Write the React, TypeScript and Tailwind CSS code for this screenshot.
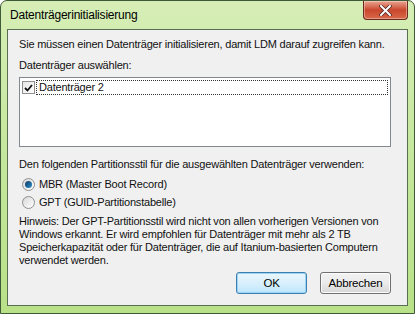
const font = { fontFamily: '"Liberation Sans", Arial, sans-serif' };

function CloseButton() {
  return (
    <div className="flex h-[19px] w-[45px] items-center justify-center rounded-b-[4px] border border-t-0 border-[#6b2a1c] bg-gradient-to-b from-[#e9a493] via-[#c9462c] to-[#d9694a] shadow-[inset_0_0_0_1px_rgba(255,255,255,0.35)]">
      <svg width="13" height="11" viewBox="0 0 13 11">
        <path d="M2 1 L11 10 M11 1 L2 10" stroke="#4a2018" strokeWidth="3.4" strokeLinecap="square" />
        <path d="M2 1 L11 10 M11 1 L2 10" stroke="#ffffff" strokeWidth="2" strokeLinecap="square" />
      </svg>
    </div>
  );
}

function Radio({ checked }: { checked?: boolean }) {
  return (
    <span className="flex h-[13px] w-[13px] items-center justify-center rounded-full border border-[#8f8f8f] bg-gradient-to-br from-[#d8d8d8] to-[#ffffff]">
      {checked && <span className="h-[7px] w-[7px] rounded-full bg-gradient-to-br from-[#0f3d66] to-[#2f8fcc]" />}
    </span>
  );
}

function Button({ label, primary }: { label: string; primary?: boolean }) {
  return (
    <div
      className={
        "flex h-[22px] w-[71px] items-center justify-center rounded-[3px] border bg-gradient-to-b text-[11.5px] tracking-[-0.2px] text-black " +
        (primary
          ? "border-[#3c7fb1] from-[#eaf6fd] via-[#d9f0fc] to-[#bee6fd] shadow-[inset_0_0_0_1px_#9ed4f3]"
          : "border-[#707070] from-[#f2f2f2] via-[#ebebeb] to-[#d6d6d6] shadow-[inset_0_0_0_1px_#fcfcfc]")
      }
    >
      {label}
    </div>
  );
}

export default function App() {
  return (
    <div className="h-[314px] w-[415px] bg-white" style={font}>
      <div className="flex h-full w-full flex-col rounded-t-[7px] border border-[#3f5a36] bg-gradient-to-b from-[#d6eeb6] via-[#c5e79d] to-[#b8e188] px-[6px] pb-[7px]">
        <div className="flex h-[28px] items-start justify-between">
          <span className="mt-[7px] pl-[3px] text-[12px] leading-[15px] tracking-[-0.2px] text-black">Datenträgerinitialisierung</span>
          <CloseButton />
        </div>
        <div className="flex flex-1 flex-col whitespace-nowrap border border-[#5a6f52] bg-[#f0f0f0] pl-[11px] pr-[16px] pt-[7px] text-[11px] leading-[15px] tracking-[-0.2px] text-[#111]">
          <p>Sie müssen einen Datenträger initialisieren, damit LDM darauf zugreifen kann.</p>
          <p className="mt-[6px]">Datenträger auswählen:</p>
          <div className="mt-[4px] h-[70px] border border-[#828790] bg-white px-[2px] pt-[2px]">
            <div className="flex h-[15px] items-center gap-[1px]">
              <span className="flex h-[13px] w-[13px] items-center justify-center border border-[#8f8f8f] bg-gradient-to-br from-[#e6e6e6] to-white">
                <svg width="9" height="8" viewBox="0 0 9 8">
                  <path d="M1 4 L3.5 6.5 L8 1" stroke="#111" strokeWidth="1.8" fill="none" />
                </svg>
              </span>
              <span className="h-[15px] flex-1 border border-dotted border-[#333] pl-[2px] leading-[13px]">Datenträger 2</span>
            </div>
          </div>
          <p className="mt-[10px]">Den folgenden Partitionsstil für die ausgewählten Datenträger verwenden:</p>
          <div className="mt-[5px] flex h-[15px] items-center gap-[4px] pl-[3px]">
            <Radio checked />
            <span>MBR (Master Boot Record)</span>
          </div>
          <div className="mt-[3px] flex h-[15px] items-center gap-[4px] pl-[3px]">
            <Radio />
            <span>GPT (GUID-Partitionstabelle)</span>
          </div>
          <p className="mt-[5px] leading-[13px]">
            Hinweis: Der GPT-Partitionsstil wird nicht von allen vorherigen Versionen von
            <br />
            Windows erkannt. Er wird empfohlen für Datenträger mit mehr als 2 TB
            <br />
            Speicherkapazität oder für Datenträger, die auf Itanium-basierten Computern
            <br />
            verwendet werden.
          </p>
          <div className="mt-[5px] flex justify-end gap-[13px]">
            <Button label="OK" primary />
            <Button label="Abbrechen" />
          </div>
        </div>
      </div>
    </div>
  );
}
